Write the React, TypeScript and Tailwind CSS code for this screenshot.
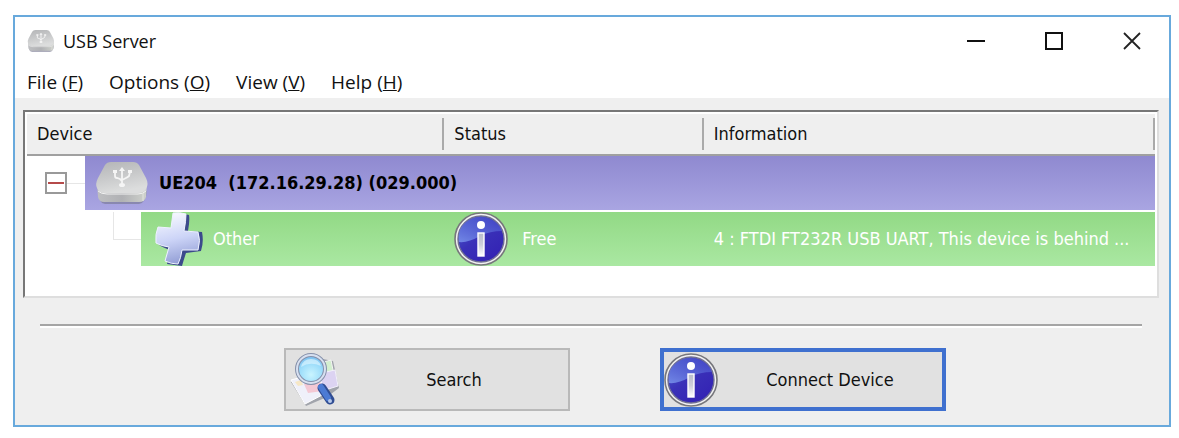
import React from 'react';

const menus = [
  { label: 'File', hotkey: 'F' },
  { label: 'Options', hotkey: 'O' },
  { label: 'View', hotkey: 'V' },
  { label: 'Help', hotkey: 'H' },
];

function ServerIcon({ className }: { className: string }) {
  return (
    <svg viewBox="0 0 54 44" className={className} aria-hidden="true">
      <defs>
        <linearGradient id="serverTop" x1="0" y1="0" x2="0.3" y2="1">
          <stop offset="0" stopColor="#b4b5b7" />
          <stop offset="0.55" stopColor="#c9cacb" />
          <stop offset="1" stopColor="#dcdddd" />
        </linearGradient>
        <linearGradient id="serverFront" x1="0" y1="0" x2="1" y2="0">
          <stop offset="0" stopColor="#bfc0c2" />
          <stop offset="0.5" stopColor="#b0b1b4" />
          <stop offset="1" stopColor="#cfd2cc" />
        </linearGradient>
      </defs>
      <path d="M3 30 Q3 42 10 43 L44 43 Q51 42 52 30 Z" fill="#77768f" opacity="0.6" />
      <path d="M2 22 L3 36 Q4 41 9 41 L44 41 Q50 41 51 36 L52 22 Z" fill="url(#serverFront)" />
      <path d="M16 1 L38 1 Q42 1 44 4 L51 17 Q54 23 51 28 Q49 32 43 32 L10 32 Q4 32 2 27 Q0 23 3 17 L10 4 Q12 1 16 1 Z" fill="url(#serverTop)" />
      <path d="M3 30 Q6 33 12 33 L43 33 Q48 33 51 30" fill="none" stroke="#f1f1f1" strokeWidth="1" />
      <path d="M48 32 L48 40" stroke="#e3e5df" strokeWidth="1" />
      <g fill="none" stroke="#f5f5f5" strokeWidth="1.8">
        <path d="M27 8 L27 23 M20 11 L20 15 Q20 17 22 17 L25 18 L27 20 M35 11 L34 15 Q33 16 31 17 L27 19" />
      </g>
      <path d="M24 10 L27 6 L30 10 Z M18 9 h4 v3 h-4 Z M33 9 h4 v3 h-4 Z" fill="#f5f5f5" />
      <ellipse cx="27" cy="24" rx="3" ry="2" fill="#f5f5f5" />
    </svg>
  );
}

function PlusIcon({ className }: { className: string }) {
  return (
    <svg viewBox="0 0 50 54" className={className} aria-hidden="true">
      <defs>
        <linearGradient id="plusFace" x1="0.4" y1="0" x2="0.6" y2="1">
          <stop offset="0" stopColor="#f6f8ff" />
          <stop offset="0.5" stopColor="#ccd4f7" />
          <stop offset="1" stopColor="#8f9bd3" />
        </linearGradient>
      </defs>
      <path
        d="M20 2 Q27 1 34 3 Q35 8 33 19 L47 20 Q49 30 46 39 L31 41 Q29 47 27 54 L12 52 L16 38 Q8 36 3 32 Q1 24 4 17 L17 17 Z"
        fill="#3c4a8c"
      />
      <path
        d="M18 1 Q25 0 31 2 Q31 9 29 19 L43 20 Q46 28 43 38 L27 38 Q26 46 23 52 Q16 52 10 49 L14 35 Q6 34 1 31 Q0 22 3 15 L16 16 Z"
        fill="url(#plusFace)"
        stroke="#eef2ff"
        strokeWidth="1"
      />
    </svg>
  );
}

function InfoIcon({ className }: { className: string }) {
  return (
    <svg viewBox="0 0 54 54" className={className} aria-hidden="true">
      <defs>
        <linearGradient id="infoBall" x1="0" y1="0" x2="0.8" y2="1">
          <stop offset="0" stopColor="#4d61cf" />
          <stop offset="0.5" stopColor="#3a31b8" />
          <stop offset="1" stopColor="#3322b4" />
        </linearGradient>
        <linearGradient id="infoShine" x1="0" y1="1" x2="0.6" y2="0">
          <stop offset="0" stopColor="#7288e6" />
          <stop offset="1" stopColor="#4b55d0" stopOpacity="0.6" />
        </linearGradient>
        <linearGradient id="infoStem" x1="0" y1="0" x2="0" y2="1">
          <stop offset="0" stopColor="#b9bbcb" />
          <stop offset="0.5" stopColor="#cdcfda" />
          <stop offset="1" stopColor="#ffffff" />
        </linearGradient>
      </defs>
      <circle cx="27" cy="27" r="26" fill="#f2f2f2" stroke="#77777c" strokeWidth="1.6" />
      <circle cx="27" cy="27" r="23" fill="url(#infoBall)" stroke="#6f6f92" strokeWidth="1.4" />
      <path d="M5 30 Q3 14 15 8 Q27 1 40 9 Q46 13 48 19 Q36 19 26 24 Q14 31 5 30 Z" fill="url(#infoShine)" />
      <circle cx="27" cy="13" r="4" fill="#ffffff" />
      <rect x="24" y="21" width="6" height="23" fill="url(#infoStem)" stroke="#ffffff" strokeWidth="1.4" />
    </svg>
  );
}

function SearchIcon({ className }: { className: string }) {
  return (
    <svg viewBox="0 0 50 54" className={className} aria-hidden="true">
      <defs>
        <radialGradient id="lens" cx="0.5" cy="0.7" r="0.7">
          <stop offset="0" stopColor="#c9f4ff" />
          <stop offset="0.6" stopColor="#9bdcfa" />
          <stop offset="1" stopColor="#6fb4ea" />
        </radialGradient>
      </defs>
      <path d="M1 29 L16 53 L37 44 L49 35 L43 8 L33 6 L30 22 Z" fill="#777b88" opacity="0.6" />
      <path d="M30 10 L41 7 L44 22 L32 26 Z" fill="#d3efcf" stroke="#f4f4f4" />
      <path d="M27 21 L45 17 L48 33 L32 38 Z" fill="#dcd3f2" stroke="#f3f1fb" />
      <path d="M1 27 L27 20 L36 40 L15 51 Z" fill="#eff0fa" stroke="#ffffff" />
      <path d="M14 31 L30 28 L33 38 L18 40 Z" fill="#f3c8d4" />
      <path d="M5 29 L11 27 L13 32 L8 33 Z" fill="#f6e7c6" />
      <path d="M32 35 L40 47" stroke="#304d93" strokeWidth="9" strokeLinecap="round" />
      <path d="M31 34 L38 45" stroke="#4c7bd4" strokeWidth="6" strokeLinecap="round" />
      <circle cx="40" cy="48" r="2" fill="#b8c9ea" />
      <circle cx="21" cy="16" r="14" fill="url(#lens)" stroke="#8590aa" strokeWidth="4" />
      <circle cx="21" cy="16" r="14" fill="none" stroke="#d7e0f0" strokeWidth="2" />
      <path d="M11 14 Q13 6 21 6 Q29 6 31 13 Q20 8 11 14 Z" fill="#d9f4ff" opacity="0.7" />
    </svg>
  );
}

function TitleBar() {
  return (
    <header className="flex h-12 items-center pl-3 pr-7">
      <ServerIcon className="h-6 w-7" />
      <h1 className="flex-1 pl-2 font-['Open_Sans',sans-serif] text-[18px] leading-6 text-[#111]">USB Server</h1>
      <div className="flex items-center gap-[60px]">
        <button type="button" aria-label="Minimize">
          <svg viewBox="0 0 18 18" className="h-[18px] w-[18px]"><path d="M0 9 H18" stroke="#111" strokeWidth="2" /></svg>
        </button>
        <button type="button" aria-label="Maximize">
          <svg viewBox="0 0 18 18" className="h-[18px] w-[18px]"><rect x="1" y="1" width="16" height="16" fill="none" stroke="#111" strokeWidth="2" /></svg>
        </button>
        <button type="button" aria-label="Close">
          <svg viewBox="0 0 18 18" className="h-[18px] w-[18px]"><path d="M1 1 L17 17 M17 1 L1 17" stroke="#222" strokeWidth="1.8" /></svg>
        </button>
      </div>
    </header>
  );
}

function DeviceTable() {
  return (
    <div className="border-2 border-b-[#dedede] border-l-[#777] border-r-[#dedede] border-t-[#777] bg-white">
      <div className="border-2 border-white pb-7">
        <table className="w-full table-fixed border-collapse text-left">
          <thead>
            <tr className="h-10 border-b-2 border-[#a0a0a0] bg-[#efefef]">
              <th scope="col" className="w-[37%] py-1 font-normal">
                <div className="border-r-2 border-[#aaa] pl-[10px] leading-8">Device</div>
              </th>
              <th scope="col" className="w-[23%] py-1 font-normal">
                <div className="border-r-2 border-[#aaa] pl-[10px] leading-8">Status</div>
              </th>
              <th scope="col" className="py-1 font-normal">
                <div className="border-r-2 border-[#aaa] pl-[10px] leading-8">Information</div>
              </th>
            </tr>
          </thead>
          <tbody>
            <tr>
              <td colSpan={3} className="p-0">
                <div className="flex h-[54px] items-center">
                  <div className="flex w-[58px] items-center pl-[18px]">
                    <button type="button" aria-label="Collapse UE204" className="flex h-[22px] w-[22px] items-center justify-center border-2 border-[#999] bg-white">
                      <span className="h-[2px] w-4 bg-[#b54a4a]" />
                    </button>
                    <span className="h-px flex-1 bg-[#e6e6e6]" />
                  </div>
                  <div className="flex h-full flex-1 items-center bg-gradient-to-b from-[#8f89d0] to-[#a9a5e2] pl-[10px] font-bold text-black">
                    <ServerIcon className="h-11 w-[54px]" />
                    <span className="whitespace-pre pl-[10px]">UE204  (172.16.29.28) (029.000)</span>
                  </div>
                </div>
              </td>
            </tr>
            <tr className="border-t-2 border-white text-white">
              <td className="p-0">
                <div className="flex h-[54px]">
                  <div className="w-[114px] pl-[86px]">
                    <div className="h-7 border-b border-l border-[#e6e6e6]" />
                  </div>
                  <div className="flex flex-1 items-center bg-gradient-to-b from-[#92d985] to-[#aae8a2] pl-[14px]">
                    <PlusIcon className="h-[54px] w-[50px]" />
                    <span className="pl-2">Other</span>
                  </div>
                </div>
              </td>
              <td className="p-0">
                <div className="flex h-[54px] items-center bg-gradient-to-b from-[#92d985] to-[#aae8a2] pl-[10px]">
                  <InfoIcon className="h-[54px] w-[54px]" />
                  <span className="pl-[14px]">Free</span>
                </div>
              </td>
              <td className="p-0">
                <div className="flex h-[54px] items-center bg-gradient-to-b from-[#92d985] to-[#aae8a2] pl-[10px]">
                  <span className="overflow-hidden whitespace-nowrap">4 : FTDI FT232R USB UART, This device is behind ...</span>
                </div>
              </td>
            </tr>
          </tbody>
        </table>
      </div>
    </div>
  );
}

export default function App() {
  return (
    <div className="bg-white pb-3 pl-[13px] pr-2 pt-[15px] font-['DejaVu_Sans_Condensed','DejaVu_Sans',sans-serif] text-[18px] leading-6 text-[#111]">
      <div className="border-2 border-[#68a9dc] bg-white">
        <TitleBar />
        <nav className="flex h-[33px] items-center gap-[26px] pl-3 font-['Open_Sans',sans-serif] text-[19px]">
          {menus.map((menu) => (
            <button key={menu.label} type="button" className="whitespace-nowrap">
              {menu.label} (<span className="underline">{menu.hotkey}</span>)
            </button>
          ))}
        </nav>

        <main className="bg-[#efefef] pb-[14px] pl-2 pr-[10px] pt-3">
          <DeviceTable />

          <hr className="ml-[17px] mr-[17px] mt-[26px] h-1 border-b-2 border-t-2 border-b-white border-t-[#a5a5a5]" />

          <div className="mt-5 flex justify-center gap-[90px] pl-12">
            <button type="button" className="flex h-[63px] w-[286px] items-center border-2 border-[#b9b9b9] bg-[#e1e1e1] pl-1">
              <SearchIcon className="h-[54px] w-[50px]" />
              <span className="flex-1 text-center">Search</span>
            </button>
            <button type="button" className="flex h-[63px] w-[286px] items-center border-4 border-[#3f70cf] bg-[#e1e1e1]">
              <InfoIcon className="h-[54px] w-[54px]" />
              <span className="flex-1 text-center">Connect Device</span>
            </button>
          </div>
        </main>
      </div>
    </div>
  );
}
